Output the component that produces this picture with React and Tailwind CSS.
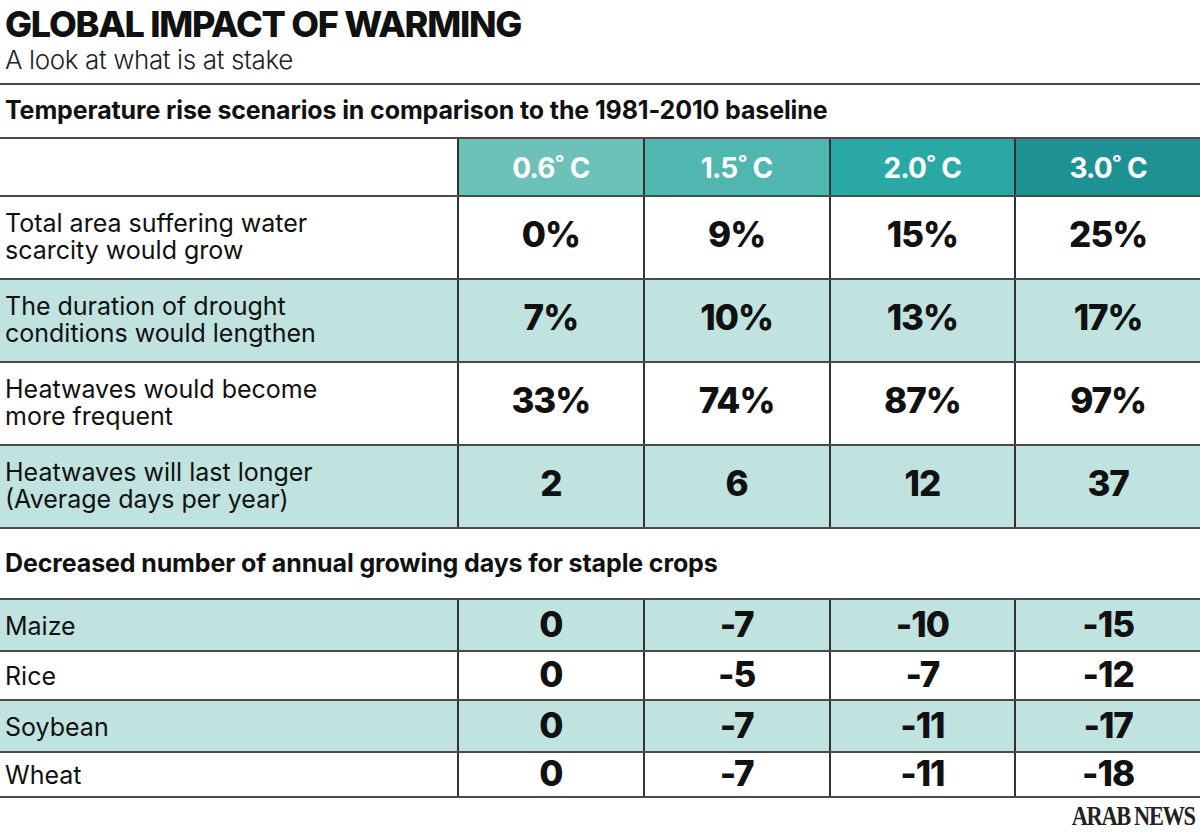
import React from "react";

const temps = ["0.6", "1.5", "2.0", "3.0"];
const headBg = ["bg-[#6cc2b8]", "bg-[#4fb6b0]", "bg-[#2aa8a6]", "bg-[#1d9194]"];

const impacts = [
  { label: ["Total area suffering water", "scarcity would grow"], values: ["0%", "9%", "15%", "25%"] },
  { label: ["The duration of drought", "conditions would lengthen"], values: ["7%", "10%", "13%", "17%"] },
  { label: ["Heatwaves would become", "more frequent"], values: ["33%", "74%", "87%", "97%"] },
  { label: ["Heatwaves will last longer", "(Average days per year)"], values: ["2", "6", "12", "37"] },
];

const crops = [
  { name: "Maize", values: ["0", "-7", "-10", "-15"], h: "h-[52px]" },
  { name: "Rice", values: ["0", "-5", "-7", "-12"], h: "h-[49px]" },
  { name: "Soybean", values: ["0", "-7", "-11", "-17"], h: "h-[52px]" },
  { name: "Wheat", values: ["0", "-7", "-11", "-18"], h: "h-[45px]" },
];

export default function App() {
  return (
    <div className="w-[1200px] h-[832px] bg-white text-[#111] font-['Inter',sans-serif] overflow-hidden">
      {/* titulo */}
      <div className="px-[5px] pt-[3px]">
        <h1 className="text-[36px] leading-[42px] font-extrabold tracking-[-0.035em]">GLOBAL IMPACT OF WARMING</h1>
        <p className="text-[26px] leading-[30px] font-light tracking-[-0.015em] text-[#222]">A look at what is at stake</p>
      </div>

      <div className="mt-[8px] border-t-2 border-[#4a4a4a]" />
      <div className="h-[52px] flex items-center px-[5px]">
        <h2 className="text-[25px] font-bold tracking-[-0.005em]">
          Temperature rise scenarios in comparison to the 1981-2010 baseline
        </h2>
      </div>

      {/* tabela de temperaturas */}
      <div className="border-t-2 border-[#4a4a4a]">
        <div className="grid grid-cols-[457px_1fr_1fr_1fr_1fr] h-[56px]">
          <div />
          {temps.map((t, i) => (
            <div
              key={t}
              className={`${headBg[i]} border-l-2 border-[#333] flex items-center justify-center pt-[2px] text-white text-[28px] leading-none font-bold tracking-[-0.03em]`}
            >
              {t}˚ C
            </div>
          ))}
        </div>
        {impacts.map((row, r) => (
          <div
            key={r}
            className={`grid grid-cols-[457px_1fr_1fr_1fr_1fr] h-[83px] border-t-2 border-[#4a4a4a] ${r % 2 === 1 ? "bg-[#c0e3df]" : "bg-white"}`}
          >
            <div className="flex items-center px-[5px] pb-[2px]">
              <p className="text-[25px] leading-[27px] tracking-normal">
                {row.label[0]}
                <br />
                {row.label[1]}
              </p>
            </div>
            {row.values.map((v, i) => (
              <div key={i} className="border-l-2 border-[#333] flex items-center justify-center pb-[6px] text-[35px] leading-none font-extrabold tracking-[-0.03em]">
                {v}
              </div>
            ))}
          </div>
        ))}
      </div>

      <div className="border-t-2 border-[#4a4a4a] h-[71px] flex items-center px-[5px]">
        <h2 className="text-[25px] font-bold tracking-[-0.005em]">
          Decreased number of annual growing days for staple crops
        </h2>
      </div>

      {/* dias de cultivo */}
      <div className="border-b-2 border-[#4a4a4a]">
        {crops.map((c, r) => (
          <div
            key={c.name}
            className={`grid grid-cols-[457px_1fr_1fr_1fr_1fr] ${c.h} border-t-2 border-[#4a4a4a] ${r % 2 === 0 ? "bg-[#c0e3df]" : "bg-white"}`}
          >
            <div className="flex items-center px-[5px] pt-[2px] text-[25px] leading-none tracking-normal">{c.name}</div>
            {c.values.map((v, i) => (
              <div key={i} className="border-l-2 border-[#333] flex items-center justify-center pb-[2px] text-[35px] leading-none font-extrabold tracking-[-0.03em]">
                {v}
              </div>
            ))}
          </div>
        ))}
      </div>

      <div className="flex justify-end pr-[5px] pt-[6px]">
        <span className="inline-block origin-right scale-x-[0.8] font-['Liberation_Serif',serif] font-bold text-[28px] leading-[24px] tracking-[-0.06em] text-[#222]">
          ARAB NEWS
        </span>
      </div>
    </div>
  );
}
